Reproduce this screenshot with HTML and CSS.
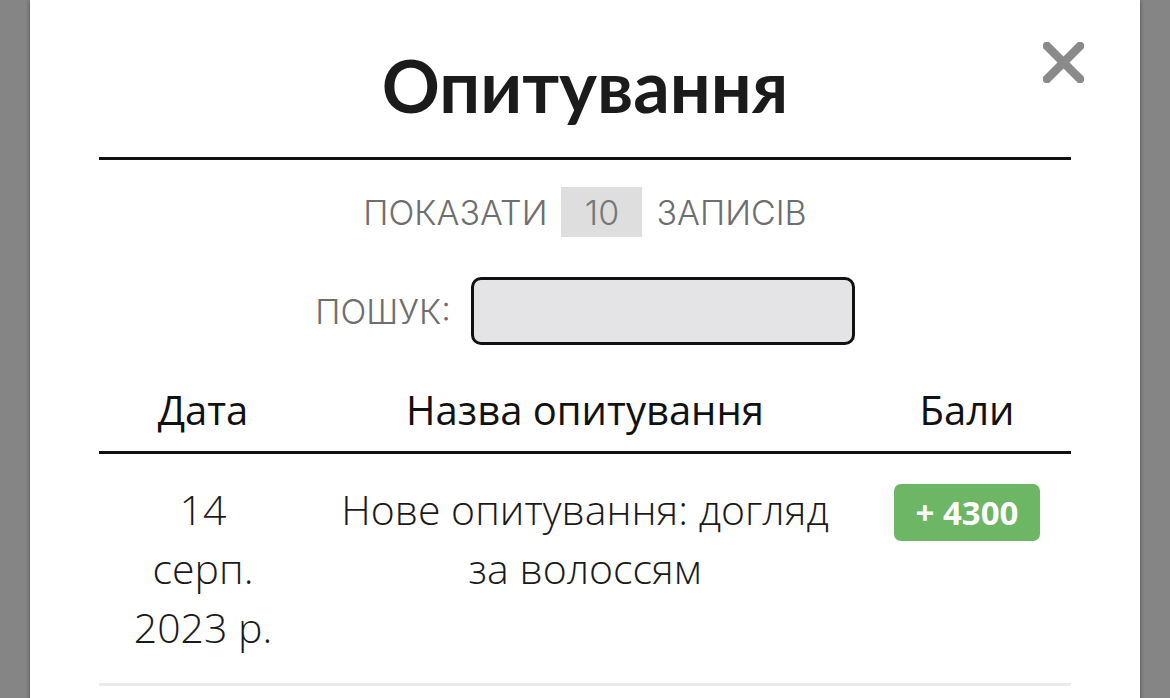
FILE: index.html
```html
<!DOCTYPE html>
<html lang="uk">
<head>
<meta charset="utf-8">
<title>Опитування</title>
<link rel="stylesheet" href="styles.css">
</head>
<body>
<div class="modal">
  <button class="close" aria-label="Закрити">
    <svg width="41" height="41" viewBox="0 0 41 41"><path d="M4 4 L37 37 M37 4 L4 37" stroke="#8a8a8a" stroke-width="8.5" stroke-linecap="square"/></svg>
  </button>
  <h1 class="title">Опитування</h1>
  <div class="controls">
    <div class="length">
      <span class="label">ПОКАЗАТИ</span>
      <span class="select">10</span>
      <span class="label">ЗАПИСІВ</span>
    </div>
    <div class="search">
      <span class="label">ПОШУК:</span>
      <span class="input"></span>
    </div>
  </div>
  <table class="table">
    <thead>
      <tr>
        <th class="c-date">Дата</th>
        <th class="c-name">Назва опитування</th>
        <th class="c-pts">Бали</th>
      </tr>
    </thead>
    <tbody>
      <tr>
        <td class="c-date"><span class="ln">14</span><span class="ln">серп.</span><span class="ln">2023 р.</span></td>
        <td class="c-name">Нове опитування: догляд за волоссям</td>
        <td class="c-pts"><span class="badge">+ 4300</span></td>
      </tr>
    </tbody>
  </table>
</div>
</body>
</html>
```

FILE: styles.css
```css
html, body {
  margin: 0;
  height: 100%;
}
body {
  background: #858585;
  padding: 0 30px;
  overflow: hidden;
  font-family: "Open Sans", "Noto Sans", sans-serif;
}
.modal {
  position: relative;
  background: #fff;
  min-height: 760px;
  padding: 45px 69px 0;
  box-shadow: 0 0 4px rgba(0, 0, 0, 0.45);
}
.close {
  position: absolute;
  top: 42px;
  right: 56px;
  width: 41px;
  height: 41px;
  padding: 0;
  border: 0;
  background: none;
}
.close svg { display: block; }
.title {
  margin: 0;
  text-align: center;
  font-family: "Lato", "Noto Sans", sans-serif;
  font-weight: 700;
  font-size: 72px;
  line-height: 80px;
  color: #1b1b1b;
  padding-bottom: 32px;
  border-bottom: 3px solid #111;
}
.controls {
  display: flex;
  flex-direction: column;
  align-items: center;
  gap: 40px;
  padding-top: 27px;
}
.length, .search {
  display: flex;
  align-items: center;
  gap: 14px;
}
.search { gap: 20px; }
.label {
  font-family: "Inter", "Liberation Sans", sans-serif;
  font-weight: 300;
  font-size: 34px;
  color: #6e6e6e;
}
.select {
  display: flex;
  align-items: center;
  justify-content: center;
  width: 81px;
  height: 50px;
  background: #dedede;
  font-family: "Inter", "Liberation Sans", sans-serif;
  font-weight: 300;
  font-size: 34px;
  color: #777;
}
.input {
  display: block;
  width: 378px;
  height: 62px;
  border: 3px solid #111;
  border-radius: 10px;
  background: #e4e4e6;
}
.table {
  width: 100%;
  margin-top: 20px;
  border-collapse: collapse;
  table-layout: fixed;
}
.table th {
  font-family: "Open Sans", sans-serif;
  font-weight: 500;
  font-size: 40px;
  line-height: 50px;
  color: #111;
  padding: 20px 0 16px;
  border-bottom: 3px solid #111;
}
.table td {
  vertical-align: top;
  text-align: center;
  font-weight: 300;
  font-size: 41px;
  line-height: 59px;
  color: #1a1a1a;
  padding: 26px 0 26px;
  border-bottom: 3px solid #ebebeb;
}
.c-date { width: 208px; }
.c-pts { width: 208px; }
.table td.c-name { padding-left: 30px; padding-right: 30px; }
.ln { display: block; }
.badge {
  display: inline-block;
  margin-top: 4px;
  width: 146px;
  height: 57px;
  line-height: 57px;
  border-radius: 7px;
  background: #6cb665;
  color: #fff;
  font-family: "Open Sans", sans-serif;
  font-weight: 700;
  font-size: 33px;
}
```
